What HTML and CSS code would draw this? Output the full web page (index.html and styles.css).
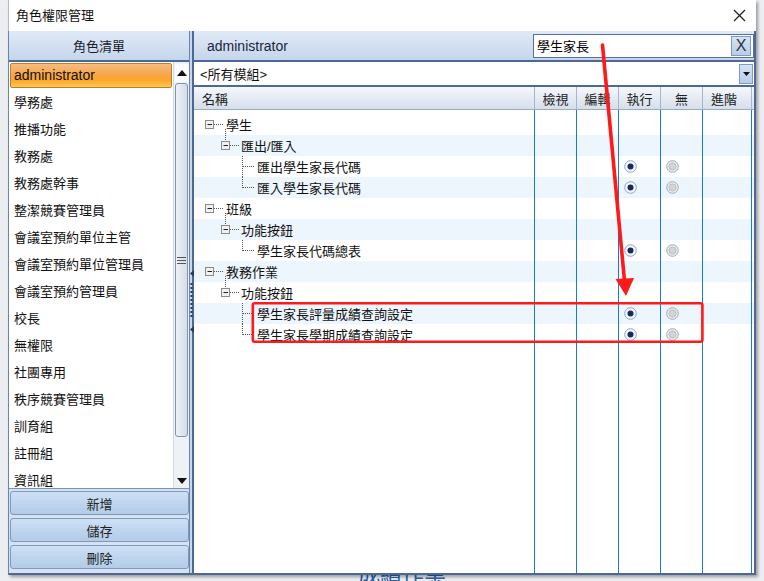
FILE: index.html
```html
<!DOCTYPE html>
<html lang="zh-Hant">
<head>
  <meta charset="UTF-8" />
  <title>角色權限管理</title>
  <link rel="stylesheet" href="styles.css">
</head>
<body>
  <div class="desk">
    <div class="dialog">
      <div class="titlebar">
        <span class="title">角色權限管理</span>
        <svg class="close" width="13" height="13" viewBox="0 0 13 13"><path d="M1 1L12 12M12 1L1 12" stroke="#222" stroke-width="1.3"/></svg>
      </div>
      <div class="frame">
        <div class="left">
          <div class="panel-head">角色清單</div>
          <div class="list-wrap">
            <ul class="role-list">
              <li class="sel latin">administrator</li>
              <li>學務處</li>
              <li>推播功能</li>
              <li>教務處</li>
              <li>教務處幹事</li>
              <li>整潔競賽管理員</li>
              <li>會議室預約單位主管</li>
              <li>會議室預約單位管理員</li>
              <li>會議室預約管理員</li>
              <li>校長</li>
              <li>無權限</li>
              <li>社團專用</li>
              <li>秩序競賽管理員</li>
              <li>訓育組</li>
              <li>註冊組</li>
              <li>資訊組</li>
            </ul>
            <div class="vscroll">
              <div class="sb-btn up"><svg width="10" height="6" viewBox="0 0 10 6"><path d="M5 0L10 6H0Z" fill="#111"/></svg></div>
              <div class="thumb"><svg width="9" height="7" viewBox="0 0 9 7"><path d="M0 .5H9M0 3.5H9M0 6.5H9" stroke="#555"/></svg></div>
              <div class="sb-gap"></div>
              <div class="sb-btn"><svg width="10" height="6" viewBox="0 0 10 6"><path d="M0 0H10L5 6Z" fill="#111"/></svg></div>
            </div>
          </div>
          <div class="actions">
            <button>新增</button>
            <button>儲存</button>
            <button>刪除</button>
          </div>
        </div>

        <div class="splitter">
          <svg width="4" height="64" viewBox="0 0 4 64">
            <path d="M4 0V7L0 3.5Z" fill="#1f3a6b"/>
            <path d="M1.5 13V49" stroke="#1f3a6b" stroke-width="2" stroke-dasharray="2 2"/>
            <path d="M4 56V63L0 59.5Z" fill="#1f3a6b"/>
          </svg>
        </div>

        <div class="right">
          <div class="right-head">
            <span class="latin">administrator</span>
            <div class="search">
              <span class="q">學生家長</span>
              <span class="clear">X</span>
            </div>
          </div>
          <div class="module-row">
            <span>&lt;所有模組&gt;</span>
            <span class="dd"><svg width="7" height="4" viewBox="0 0 7 4"><path d="M0 0H7L3.5 4Z" fill="#111"/></svg></span>
          </div>
          <div class="grid-head">
            <div class="name">名稱</div>
            <div class="c">檢視</div>
            <div class="c">編輯</div>
            <div class="c">執行</div>
            <div class="c">無</div>
            <div class="c c5">進階</div>
            <div class="end"></div>
          </div>
          <div class="grid-body">
            <div class="row spacer"><div class="name"></div><div class="c"></div><div class="c"></div><div class="c"></div><div class="c"></div><div class="c c5"></div><div class="end"></div></div>

            <div class="row">
              <div class="name"><svg class="twig" width="32" height="21"><g stroke="#555" stroke-dasharray="1 1"><path d="M20 10.5H29"/><path d="M31.5 15V21"/></g><rect x="11.5" y="6.5" width="8" height="8" fill="#f1f1f1" stroke="#8a8a8a"/><path d="M13.5 10.5H18" stroke="#222"/></svg>學生</div>
              <div class="c"></div><div class="c"></div><div class="c"></div><div class="c"></div><div class="c c5"></div><div class="end"></div>
            </div>
            <div class="row alt">
              <div class="name"><svg class="twig" width="47" height="21"><g stroke="#555" stroke-dasharray="1 1"><path d="M31.5 0V6"/><path d="M36 10.5H45"/></g><rect x="27.5" y="6.5" width="8" height="8" fill="#f1f1f1" stroke="#8a8a8a"/><path d="M29.5 10.5H34" stroke="#222"/></svg>匯出/匯入</div>
              <div class="c"></div><div class="c"></div><div class="c"></div><div class="c"></div><div class="c c5"></div><div class="end"></div>
            </div>
            <div class="row">
              <div class="name"><svg class="twig" width="63" height="21"><g stroke="#555" stroke-dasharray="1 1"><path d="M48.5 0V21"/><path d="M49 10.5H60"/></g></svg>匯出學生家長代碼</div>
              <div class="c"></div><div class="c"></div>
              <div class="c"><svg class="rb" width="13" height="13" viewBox="0 0 13 13"><circle cx="6.5" cy="6.5" r="5.8" fill="#f5f7fb" stroke="#8ea6c8"/><circle cx="6.5" cy="6.5" r="3" fill="#172a5c"/></svg></div>
              <div class="c"><svg class="rb" width="13" height="13" viewBox="0 0 13 13"><circle cx="6.5" cy="6.5" r="5.8" fill="#eeeeee" stroke="#98aac4"/><circle cx="6.5" cy="6.5" r="3.6" fill="#d4d4d4" stroke="#b5b5b5" stroke-width=".8"/></svg></div>
              <div class="c c5"></div><div class="end"></div>
            </div>
            <div class="row alt">
              <div class="name"><svg class="twig" width="63" height="21"><g stroke="#555" stroke-dasharray="1 1"><path d="M48.5 0V11"/><path d="M49 10.5H60"/></g></svg>匯入學生家長代碼</div>
              <div class="c"></div><div class="c"></div>
              <div class="c"><svg class="rb" width="13" height="13" viewBox="0 0 13 13"><circle cx="6.5" cy="6.5" r="5.8" fill="#f5f7fb" stroke="#8ea6c8"/><circle cx="6.5" cy="6.5" r="3" fill="#172a5c"/></svg></div>
              <div class="c"><svg class="rb" width="13" height="13" viewBox="0 0 13 13"><circle cx="6.5" cy="6.5" r="5.8" fill="#eeeeee" stroke="#98aac4"/><circle cx="6.5" cy="6.5" r="3.6" fill="#d4d4d4" stroke="#b5b5b5" stroke-width=".8"/></svg></div>
              <div class="c c5"></div><div class="end"></div>
            </div>
            <div class="row">
              <div class="name"><svg class="twig" width="32" height="21"><g stroke="#555" stroke-dasharray="1 1"><path d="M20 10.5H29"/><path d="M31.5 15V21"/></g><rect x="11.5" y="6.5" width="8" height="8" fill="#f1f1f1" stroke="#8a8a8a"/><path d="M13.5 10.5H18" stroke="#222"/></svg>班級</div>
              <div class="c"></div><div class="c"></div><div class="c"></div><div class="c"></div><div class="c c5"></div><div class="end"></div>
            </div>
            <div class="row alt">
              <div class="name"><svg class="twig" width="47" height="21"><g stroke="#555" stroke-dasharray="1 1"><path d="M31.5 0V6"/><path d="M36 10.5H45"/></g><rect x="27.5" y="6.5" width="8" height="8" fill="#f1f1f1" stroke="#8a8a8a"/><path d="M29.5 10.5H34" stroke="#222"/></svg>功能按鈕</div>
              <div class="c"></div><div class="c"></div><div class="c"></div><div class="c"></div><div class="c c5"></div><div class="end"></div>
            </div>
            <div class="row">
              <div class="name"><svg class="twig" width="63" height="21"><g stroke="#555" stroke-dasharray="1 1"><path d="M48.5 0V11"/><path d="M49 10.5H60"/></g></svg>學生家長代碼總表</div>
              <div class="c"></div><div class="c"></div>
              <div class="c"><svg class="rb" width="13" height="13" viewBox="0 0 13 13"><circle cx="6.5" cy="6.5" r="5.8" fill="#f5f7fb" stroke="#8ea6c8"/><circle cx="6.5" cy="6.5" r="3" fill="#172a5c"/></svg></div>
              <div class="c"><svg class="rb" width="13" height="13" viewBox="0 0 13 13"><circle cx="6.5" cy="6.5" r="5.8" fill="#eeeeee" stroke="#98aac4"/><circle cx="6.5" cy="6.5" r="3.6" fill="#d4d4d4" stroke="#b5b5b5" stroke-width=".8"/></svg></div>
              <div class="c c5"></div><div class="end"></div>
            </div>
            <div class="row alt">
              <div class="name"><svg class="twig" width="32" height="21"><g stroke="#555" stroke-dasharray="1 1"><path d="M20 10.5H29"/><path d="M31.5 15V21"/></g><rect x="11.5" y="6.5" width="8" height="8" fill="#f1f1f1" stroke="#8a8a8a"/><path d="M13.5 10.5H18" stroke="#222"/></svg>教務作業</div>
              <div class="c"></div><div class="c"></div><div class="c"></div><div class="c"></div><div class="c c5"></div><div class="end"></div>
            </div>
            <div class="row">
              <div class="name"><svg class="twig" width="47" height="21"><g stroke="#555" stroke-dasharray="1 1"><path d="M31.5 0V6"/><path d="M36 10.5H45"/></g><rect x="27.5" y="6.5" width="8" height="8" fill="#f1f1f1" stroke="#8a8a8a"/><path d="M29.5 10.5H34" stroke="#222"/></svg>功能按鈕</div>
              <div class="c"></div><div class="c"></div><div class="c"></div><div class="c"></div><div class="c c5"></div><div class="end"></div>
            </div>
            <div class="row alt">
              <div class="name"><svg class="twig" width="63" height="21"><g stroke="#555" stroke-dasharray="1 1"><path d="M48.5 0V21"/><path d="M49 10.5H60"/></g></svg>學生家長評量成績查詢設定</div>
              <div class="c"></div><div class="c"></div>
              <div class="c"><svg class="rb" width="13" height="13" viewBox="0 0 13 13"><circle cx="6.5" cy="6.5" r="5.8" fill="#f5f7fb" stroke="#8ea6c8"/><circle cx="6.5" cy="6.5" r="3" fill="#172a5c"/></svg></div>
              <div class="c"><svg class="rb" width="13" height="13" viewBox="0 0 13 13"><circle cx="6.5" cy="6.5" r="5.8" fill="#eeeeee" stroke="#98aac4"/><circle cx="6.5" cy="6.5" r="3.6" fill="#d4d4d4" stroke="#b5b5b5" stroke-width=".8"/></svg></div>
              <div class="c c5"></div><div class="end"></div>
            </div>
            <div class="row">
              <div class="name"><svg class="twig" width="63" height="21"><g stroke="#555" stroke-dasharray="1 1"><path d="M48.5 0V11"/><path d="M49 10.5H60"/></g></svg>學生家長學期成績查詢設定</div>
              <div class="c"></div><div class="c"></div>
              <div class="c"><svg class="rb" width="13" height="13" viewBox="0 0 13 13"><circle cx="6.5" cy="6.5" r="5.8" fill="#f5f7fb" stroke="#8ea6c8"/><circle cx="6.5" cy="6.5" r="3" fill="#172a5c"/></svg></div>
              <div class="c"><svg class="rb" width="13" height="13" viewBox="0 0 13 13"><circle cx="6.5" cy="6.5" r="5.8" fill="#eeeeee" stroke="#98aac4"/><circle cx="6.5" cy="6.5" r="3.6" fill="#d4d4d4" stroke="#b5b5b5" stroke-width=".8"/></svg></div>
              <div class="c c5"></div><div class="end"></div>
            </div>

            <div class="row filler"><div class="name"></div><div class="c"></div><div class="c"></div><div class="c"></div><div class="c"></div><div class="c c5"></div><div class="end"></div></div>
          </div>
        </div>
      </div>
    </div>
    <div class="under">成績作業</div>
  </div>

  <!-- red annotation drawn over the screenshot -->
  <svg class="annot" width="764" height="581" viewBox="0 0 764 581">
    <path d="M602.5 45L624.5 281" stroke="#ff1a1a" stroke-width="3.6" stroke-linecap="round"/>
    <path d="M615.5 279L634 278L626 296Z" fill="#ff1a1a"/>
    <rect x="252.8" y="303.2" width="449.6" height="38.6" rx="2" fill="none" stroke="#ff1a1a" stroke-width="2.6"/>
  </svg>
</body>
</html>
```

FILE: styles.css
```css
* {
  box-sizing: border-box;
}
body {
  margin: 0;
  width: 764px;
  height: 581px;
  overflow: hidden;
  background: #eceef2;
  font-family: "Liberation Sans", "Noto Sans CJK TC", sans-serif;
  font-size: 13px;
  color: #111;
  position: relative;
}
.latin {
  font-size: 14px;
}
.desk {
  padding-left: 8px;
}
.dialog {
  position: relative;
  z-index: 1;
  width: 748px;
  height: 575px;
  display: flex;
  flex-direction: column;
  background: #fff;
  box-shadow: 2px 2px 3px rgba(0, 0, 0, 0.35);
}
.titlebar {
  height: 31px;
  flex-shrink: 0;
  display: flex;
  align-items: center;
  justify-content: space-between;
  padding: 0 10px 0 7px;
  border-left: 1px solid #b8bcc4;
}
.title {
  line-height: 16px;
}
.frame {
  flex: 1;
  display: flex;
  min-height: 0;
  border-left: 1px solid #6b84ab;
  border-right: 2px solid #4d6895;
  border-bottom: 2px solid #4d6895;
}

/* left: role list */
.left {
  width: 180px;
  display: flex;
  flex-direction: column;
  background: #d6e2f1;
}
.panel-head {
  height: 31px;
  flex-shrink: 0;
  border-bottom: 2px solid #4d6895;
  background: linear-gradient(#e0eaf7, #c5d6ec);
  display: flex;
  align-items: center;
  justify-content: center;
  color: #1b1b2b;
}
.list-wrap {
  height: 427px;
  flex-shrink: 0;
  display: flex;
  background: #fff;
  border-bottom: 1px solid #7d93b6;
}
.role-list {
  flex: 1;
  list-style: none;
  margin: 0;
  padding: 0 1px;
  overflow: hidden;
}
.role-list li {
  height: 27px;
  line-height: 27px;
  padding-left: 4px;
  white-space: nowrap;
}
.role-list li.sel {
  margin-top: 1px;
  height: 25px;
  line-height: 23px;
  padding-left: 3px;
  border: 1px solid #b97f2c;
  border-radius: 2px;
  background: linear-gradient(#f6bd7e 0%, #f7a64c 45%, #fda52a 70%, #ffc752 100%);
  margin-bottom: 1px;
}
.vscroll {
  width: 16px;
  display: flex;
  flex-direction: column;
  align-items: center;
  background: #eef1f6;
  border-left: 1px solid #d2d9e4;
  padding-top: 2px;
}
.sb-btn {
  height: 15px;
  width: 14px;
  display: flex;
  align-items: center;
  justify-content: center;
}
.sb-btn.up {
  height: 18px;
  background: #fbfcfd;
}
.thumb {
  margin-top: 1px;
  width: 13px;
  height: 354px;
  border: 1px solid #8193ad;
  border-radius: 3px;
  background: linear-gradient(to right, #eef2f7, #d3dce8);
  display: flex;
  align-items: center;
  justify-content: center;
}
.sb-gap {
  flex: 1;
}
.actions {
  flex: 1;
  display: flex;
  flex-direction: column;
  gap: 3px;
  padding: 2px 0 0 1px;
}
.actions button {
  height: 24px;
  width: 179px;
  border: 1px solid #8098bc;
  border-radius: 3px;
  background: linear-gradient(#cde0f5, #b2cbe8);
  font-family: "Liberation Sans", "Noto Sans CJK TC", sans-serif;
  font-size: 13px;
  color: #222;
  padding: 0;
}

/* splitter between panels */
.splitter {
  width: 5px;
  border-left: 1px solid #6a83aa;
  border-right: 2px solid #4d6895;
  background: #c9d7ea;
  display: flex;
  align-items: center;
  overflow: visible;
}
.splitter svg {
  overflow: visible;
  flex-shrink: 0;
}

/* right: permission grid */
.right {
  width: 560px;
  display: flex;
  flex-direction: column;
  background: #fff;
}
.right-head {
  height: 31px;
  flex-shrink: 0;
  border-bottom: 2px solid #4d6895;
  background: linear-gradient(#e0eaf7, #c5d6ec);
  display: flex;
  align-items: center;
  padding-left: 13px;
  color: #1c2440;
}
.search {
  margin-left: auto;
  width: 221px;
  height: 24px;
  border: 1px solid #56709a;
  background: #fff;
  display: flex;
  align-items: center;
  padding: 0 2px 0 3px;
}
.search .q {
  flex: 1;
  color: #000;
}
.clear {
  width: 20px;
  height: 20px;
  border: 1px solid #7f99c0;
  background: linear-gradient(#d4e3f5, #b7cde8);
  display: flex;
  align-items: center;
  justify-content: center;
  font-size: 16px;
  color: #333;
}
.module-row {
  height: 25px;
  flex-shrink: 0;
  border-bottom: 2px solid #4d6895;
  display: flex;
  align-items: center;
  padding: 0 1px 0 6px;
}
.dd {
  margin-left: auto;
  width: 14px;
  height: 20px;
  border: 1px solid #7f99c0;
  background: linear-gradient(#d4e3f5, #b7cde8);
  display: flex;
  align-items: center;
  justify-content: center;
}
.grid-head {
  height: 23px;
  flex-shrink: 0;
  display: flex;
  border-bottom: 1px solid #9aabc5;
  background: linear-gradient(#f6f8fb, #d5deea);
  color: #222;
}
.grid-head .name {
  width: 340px;
  padding-left: 8px;
  display: flex;
  align-items: center;
}
.grid-head .c {
  width: 42px;
  border-left: 1px solid #a5b5cc;
  display: flex;
  align-items: center;
  justify-content: center;
}
.grid-head .c5 {
  width: 49px;
  padding-right: 6px;
}
.grid-head .end {
  flex: 1;
  border-left: 1px solid #a5b5cc;
}
.grid-body {
  flex: 1;
  display: flex;
  flex-direction: column;
  min-height: 0;
}
.row {
  display: flex;
  height: 21px;
  flex-shrink: 0;
}
.row.alt {
  background: #edf5fd;
}
.row.spacer {
  height: 4px;
}
.row.filler {
  flex: 1;
}
.row .name {
  width: 340px;
  display: flex;
  align-items: center;
  white-space: nowrap;
}
.twig {
  flex-shrink: 0;
}
.row .c {
  width: 42px;
  border-left: 1px solid #1b78d4;
  display: flex;
  align-items: center;
  padding-left: 5px;
}
.row .c5 {
  width: 49px;
}
.row .end {
  flex: 1;
  border-left: 1px solid #1b78d4;
}

/* page underneath the dialog */
.under {
  position: relative;
  z-index: 0;
  margin-top: -12px;
  padding-left: 350px;
  font-size: 22px;
  line-height: 24px;
  color: #2d62a6;
}
.annot {
  position: absolute;
  top: 0;
  left: 0;
  z-index: 2;
  pointer-events: none;
}
```
